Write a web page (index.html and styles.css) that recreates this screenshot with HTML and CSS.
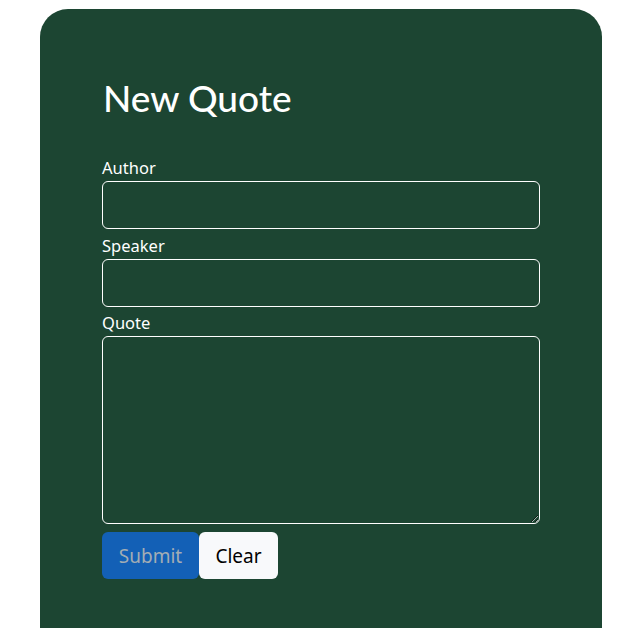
FILE: index.html
```html
<!DOCTYPE html>
<html>
<head>
<meta charset="utf-8">
<link rel="stylesheet" href="styles.css">
</head>
<body>
<div class="page">
  <div class="card">
    <h1 class="title">New Quote</h1>
    <form class="form">
      <label class="label" for="author">Author</label>
      <input class="field" id="author" type="text">
      <label class="label" for="speaker">Speaker</label>
      <input class="field" id="speaker" type="text">
      <label class="label label-quote" for="quote">Quote</label>
      <textarea class="field area" id="quote"></textarea>
      <div class="actions">
        <button type="button" class="btn submit">Submit</button>
        <button type="button" class="btn clear">Clear</button>
      </div>
    </form>
  </div>
</div>
</body>
</html>
```

FILE: styles.css
```css
html, body {
  margin: 0;
  padding: 0;
  background: #ffffff;
  height: 100%;
  overflow: hidden;
}
.page {
  padding: 9px 26px 0 40px;
}
.card {
  background: #1c4532;
  border-radius: 28px 28px 0 0;
  width: 562px;
  box-sizing: border-box;
  padding: 69px 62px 80px 62px;
  min-height: 640px;
  font-family: "Noto Sans", "Open Sans", sans-serif;
  color: #ffffff;
}
.title {
  margin: 0 0 0 1px;
  font-family: "Lato", sans-serif;
  font-weight: 500;
  font-size: 37px;
  line-height: 40px;
  letter-spacing: 0;
}
.form {
  display: flex;
  flex-direction: column;
  margin-top: 39px;
}
.label {
  font-size: 16.5px;
  line-height: 22px;
  padding-bottom: 2px;
  display: block;
  margin-top: 6px;
}
.form .label:first-child {
  margin-top: 0;
}
.form .label-quote {
  margin-top: 5px;
}
.field {
  box-sizing: border-box;
  width: 438px;
  height: 48px;
  background: transparent;
  border: 1px solid #ffffff;
  border-radius: 6px;
  color: #ffffff;
  font-size: 16px;
  padding: 6px 12px;
  margin: 0;
}
.area {
  height: 188px;
  resize: vertical;
}
.actions {
  display: flex;
  margin-top: 8px;
}
.btn {
  height: 47px;
  font-family: "Noto Sans", "Open Sans", sans-serif;
  font-size: 19px;
  border: none;
  border-radius: 6px;
  padding: 0 16px;
  margin: 0;
}
.submit {
  width: 97px;
  background: #1360b6;
  color: #a3adb4;
}
.clear {
  width: 79px;
  background: #f8f9fb;
  color: #000000;
}
```
